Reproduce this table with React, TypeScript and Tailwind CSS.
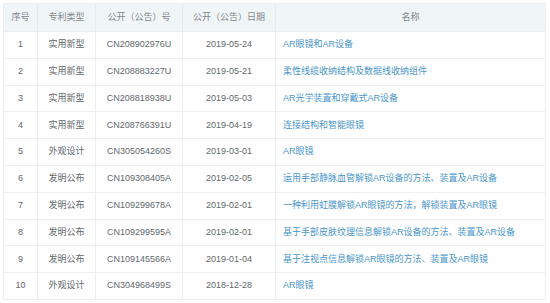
const rows = [
  ['1', '实用新型', 'CN208902976U', '2019-05-24', 'AR眼镜和AR设备'],
  ['2', '实用新型', 'CN208883227U', '2019-05-21', '柔性线缆收纳结构及数据线收纳组件'],
  ['3', '实用新型', 'CN208818938U', '2019-05-03', 'AR光学装置和穿戴式AR设备'],
  ['4', '实用新型', 'CN208766391U', '2019-04-19', '连接结构和智能眼镜'],
  ['5', '外观设计', 'CN305054260S', '2019-03-01', 'AR眼镜'],
  ['6', '发明公布', 'CN109308405A', '2019-02-05', '运用手部静脉血管解锁AR设备的方法、装置及AR设备'],
  ['7', '发明公布', 'CN109299678A', '2019-02-01', '一种利用虹膜解锁AR眼镜的方法，解锁装置及AR眼镜'],
  ['8', '发明公布', 'CN109299595A', '2019-02-01', '基于手部皮肤纹理信息解锁AR设备的方法、装置及AR设备'],
  ['9', '发明公布', 'CN109145566A', '2019-01-04', '基于注视点信息解锁AR眼镜的方法、装置及AR眼镜'],
  ['10', '外观设计', 'CN304968499S', '2018-12-28', 'AR眼镜'],
];

export default function App() {
  return (
    <div className="w-[550px] h-[303px] bg-white pt-[3px] pl-[3px] font-['Liberation_Sans','Noto_Sans_CJK_SC',sans-serif] text-[9px]">
      <table className="w-[543px] border-collapse table-fixed border border-[#eceff2]">
        <colgroup>
          <col className="w-[34px]" />
          <col className="w-[58px]" />
          <col className="w-[87px]" />
          <col className="w-[93px]" />
          <col />
        </colgroup>
        <thead>
          <tr className="h-[28px] bg-[#f0f5f8] text-[#82878c]">
            <th className="font-normal border-r border-[#e6ebef]">序号</th>
            <th className="font-normal border-r border-[#e6ebef]">专利类型</th>
            <th className="font-normal border-r border-[#e6ebef]">公开（公告）号</th>
            <th className="font-normal border-r border-[#e6ebef]">公开（公告）日期</th>
            <th className="font-normal">名称</th>
          </tr>
        </thead>
        <tbody>
          {rows.map((r) => (
            <tr key={r[0]} className="h-[26.8px] border-t border-[#eceff2] text-[#62676c]">
              <td className="text-center border-r border-[#eceff2]">{r[0]}</td>
              <td className="text-center border-r border-[#eceff2]">{r[1]}</td>
              <td className="text-center border-r border-[#eceff2]">{r[2]}</td>
              <td className="text-center border-r border-[#eceff2]">{r[3]}</td>
              <td className="pl-[7px] text-[#4a96cb] whitespace-nowrap">{r[4]}</td>
            </tr>
          ))}
        </tbody>
      </table>
    </div>
  );
}
